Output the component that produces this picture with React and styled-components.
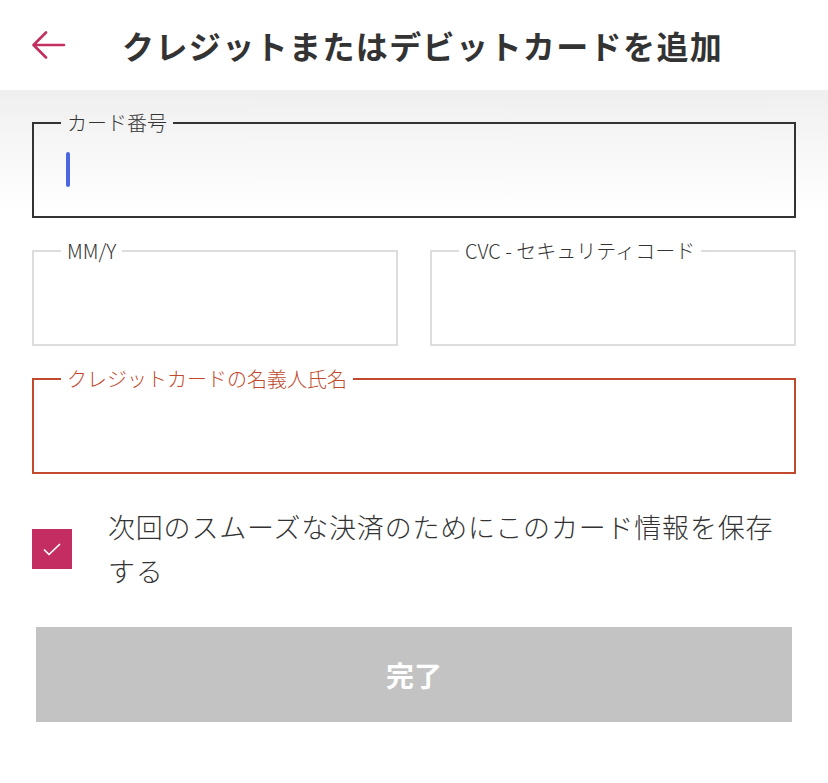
import React from "react";
import styled, { createGlobalStyle } from "styled-components";

const GlobalStyle = createGlobalStyle`
  body {
    margin: 0;
    background: #ffffff;
    font-family: "Noto Sans CJK JP", "Noto Sans", sans-serif;
    color: #333333;
  }
`;

const Page = styled.div`
  width: 828px;
  min-height: 783px;
  background: #ffffff;
`;

const Header = styled.header`
  height: 90px;
  display: flex;
  align-items: center;
  padding: 0 32px;
  box-sizing: border-box;
  background: #ffffff;
`;

const BackButton = styled.div`
  width: 34px;
  height: 30px;
  display: flex;
  align-items: center;
  margin-right: 56px;
`;

const Title = styled.h1`
  margin: 0;
  font-size: 32px;
  font-weight: 700;
  color: #333333;
  letter-spacing: 1.4px;
`;

const Main = styled.main`
  padding: 22px 32px 40px;
  background: linear-gradient(#efefef 0, #ffffff 120px);
  display: flex;
  flex-direction: column;
`;

const Row = styled.div`
  display: grid;
  grid-template-columns: 1fr 1fr;
  gap: 32px;
`;

const Field = styled.fieldset`
  margin: 0 0 22px;
  padding: 0;
  height: 106px;
  box-sizing: border-box;
  border: 2px solid ${(p) => p.$color};
  min-width: 0;
`;

const Legend = styled.legend`
  margin-left: 27px;
  padding: 0 6px;
  font-size: 20px;
  font-weight: 300;
  line-height: 22px;
  color: ${(p) => p.$color};
`;

const Cursor = styled.span`
  display: block;
  width: 4px;
  height: 35px;
  border-radius: 2px;
  background: #4a66e0;
  margin: 18px 0 0 32px;
`;

const SaveRow = styled.label`
  display: flex;
  align-items: center;
  margin: 9px 0 0;
`;

const CheckBox = styled.span`
  width: 40px;
  height: 40px;
  flex: none;
  background: #c42d62;
  display: flex;
  align-items: center;
  justify-content: center;
  margin-right: 36px;
`;

const SaveText = styled.span`
  width: 690px;
  font-size: 27px;
  font-weight: 300;
  line-height: 44px;
  letter-spacing: 0.8px;
  color: #333333;
`;

const DoneButton = styled.button`
  margin: 34px 4px 0;
  height: 95px;
  border: none;
  background: #c3c3c3;
  color: #ffffff;
  font-family: "Noto Sans CJK JP", sans-serif;
  font-size: 28px;
  font-weight: 700;
`;

export default function App() {
  return (
    <Page>
      <GlobalStyle />
      <Header>
        <BackButton>
          <svg width="34" height="28" viewBox="0 0 34 28" fill="none">
            <path
              d="M32 14H2M14 1.5L1.5 14L14 26.5"
              stroke="#c2305f"
              strokeWidth="2.6"
              strokeLinecap="round"
              strokeLinejoin="round"
            />
          </svg>
        </BackButton>
        <Title>クレジットまたはデビットカードを追加</Title>
      </Header>
      <Main>
        <Field $color="#333333">
          <Legend $color="#333333">カード番号</Legend>
          <Cursor />
        </Field>
        <Row>
          <Field $color="#dddddd">
            <Legend $color="#333333">MM/Y</Legend>
          </Field>
          <Field $color="#dddddd">
            <Legend $color="#333333">CVC - セキュリティコード</Legend>
          </Field>
        </Row>
        <Field $color="#c14a2c">
          <Legend $color="#c14a2c">クレジットカードの名義人氏名</Legend>
        </Field>
        <SaveRow>
          <CheckBox>
            <svg width="18" height="13" viewBox="0 0 18 13" fill="none">
              <path
                d="M1.5 7L6 11.5L16.5 1.5"
                stroke="#ffffff"
                strokeWidth="1.7"
                strokeLinecap="round"
                strokeLinejoin="round"
              />
            </svg>
          </CheckBox>
          <SaveText>次回のスムーズな決済のためにこのカード情報を保存する</SaveText>
        </SaveRow>
        <DoneButton>完了</DoneButton>
      </Main>
    </Page>
  );
}
